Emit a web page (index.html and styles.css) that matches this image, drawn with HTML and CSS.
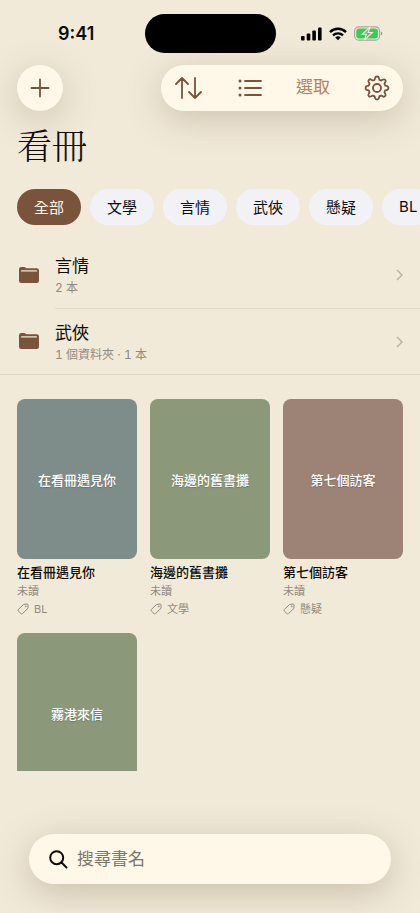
FILE: index.html
```html
<!DOCTYPE html>
<html lang="zh-Hant">
<head>
<meta charset="utf-8">
<meta name="viewport" content="width=device-width, initial-scale=1">
<title>看冊</title>
<link rel="stylesheet" href="styles.css">
</head>
<body>
<div class="status">
  <span class="time">9:41</span>
  <span class="island"></span>
  <span class="indicators">
    <svg width="21" height="14" viewBox="0 0 21 14"><rect x="0" y="9" width="3.6" height="4.5" rx="1"/><rect x="5.7" y="6.5" width="3.600" height="7" rx="1"/><rect x="11.3" y="3.5" width="3.600" height="10" rx="1"/><rect x="17" y="0.5" width="3.600" height="13" rx="1"/></svg>
    <svg width="18" height="14" viewBox="0 0 18 14" fill="none" stroke="#000" stroke-width="2.4"><path d="M1 5.1a11.4 11.4 0 0 1 16 0"/><path d="M4 8.4a7.2 7.2 0 0 1 10 0"/><path d="M9 13.3 6.2 10.5a4 4 0 0 1 5.6 0Z" fill="#000" stroke="none"/></svg>
    <svg width="29" height="15" viewBox="0 0 29 15"><rect x=".6" y=".9" width="25" height="13.2" rx="4.2" fill="none" stroke="#a9a598" stroke-width="1.1"/><rect x="2.3" y="2.6" width="21.6" height="9.8" rx="2.7" fill="#35ce5b"/><path d="M27 5.5c1.6.6 1.6 3.4 0 4Z" fill="#8d897e"/><path d="M16.2.8 8.2 8.3h4.2L10.2 14.2l8.2-7.7h-4.3Z" fill="#a29c91" stroke="#f1eada" stroke-width="1.1"/></svg>
  </span>
</div>

<header class="bar">
  <button class="add" aria-label="新增"><svg width="20" height="20" viewBox="0 0 20 20"><path d="M10 1.5v17M1.5 10h17"/></svg></button>
  <div class="tools">
    <button aria-label="排序"><svg width="30" height="24" viewBox="0 0 30 24"><path d="M8 22V2M2 8l6-6 6 6M21 2V22M15 16l6 6 6-6"/></svg></button>
    <button aria-label="清單"><svg width="24" height="20" viewBox="0 0 24 20"><path d="M7 3h16M7 10h16M7 17h16"/><g fill="#79533b" stroke="none"><circle cx="2" cy="3" r="1.5"/><circle cx="2" cy="10" r="1.5"/><circle cx="2" cy="17" r="1.5"/></g></svg></button>
    <button class="select">選取</button>
    <button aria-label="設定"><svg width="26" height="26" viewBox="0 0 26 26"><path d="M11 3.2Q11.3 1.5 13 1.5T15 3.2L15.4 4.8Q16.5 5.1 17.2 5.6L18.7 4.7Q20.2 3.9 21.2 4.9T21.3 7.3L20.4 8.8Q20.9 9.6 21.2 10.6L22.8 11Q24.5 11.3 24.5 13T22.8 15L21.2 15.4Q20.9 16.4 20.4 17.2L21.3 18.7Q22.1 20.2 21.1 21.2T18.7 21.3L17.2 20.4Q16.5 20.9 15.4 21.2L15 22.8Q14.7 24.5 13 24.5T11 22.8L10.6 21.2Q9.6 20.9 8.8 20.4L7.3 21.3Q5.8 22.1 4.8 21.1T4.7 18.7L5.6 17.2Q5.1 16.4 4.8 15.4L3.2 15Q1.5 14.7 1.5 13T3.2 11L4.8 10.6Q5.1 9.6 5.6 8.8L4.7 7.3Q3.9 5.8 4.9 4.8T7.3 4.7L8.8 5.6Q9.6 5.1 10.6 4.8Z"/><circle cx="13" cy="13" r="4"/></svg></button>
  </div>
</header>

<main>
  <h1>看冊</h1>
  <nav class="chips">
    <button class="on">全部</button><button>文學</button><button>言情</button><button>武俠</button><button>懸疑</button><button>BL</button>
  </nav>

  <div class="folders">
    <a href="#">
      <svg class="folder" viewBox="0 0 20 16"><path d="M0 5V2.3Q0 0 2.3 0H5Q6 0 6.7.7T8.4 1.3H17.700Q20 1.300 20 3.600V13.700Q20 16 17.700 16H2.300Q0 16 0 13.700Z" fill="#79533b"/><path d="M1.800 4.600Q1.800 3.200 3 3.200H17Q18.200 3.200 18.200 4.600Z" fill="#f2ead9"/></svg>
      <span class="row"><span class="text"><strong>言情</strong><small>2 本</small></span><svg class="chev" viewBox="0 0 7 12"><path d="M1 1l5 5-5 5"/></svg></span>
    </a>
    <a href="#">
      <svg class="folder" viewBox="0 0 20 16"><path d="M0 5V2.3Q0 0 2.3 0H5Q6 0 6.7.7T8.4 1.3H17.700Q20 1.300 20 3.600V13.700Q20 16 17.700 16H2.300Q0 16 0 13.700Z" fill="#79533b"/><path d="M1.800 4.600Q1.800 3.200 3 3.200H17Q18.200 3.200 18.200 4.600Z" fill="#f2ead9"/></svg>
      <span class="row"><span class="text"><strong>武俠</strong><small>1 個資料夾 · 1 本</small></span><svg class="chev" viewBox="0 0 7 12"><path d="M1 1l5 5-5 5"/></svg></span>
    </a>
  </div>

  <section class="books">
    <article><div class="cover slate">在看冊遇見你</div><h2>在看冊遇見你</h2><p>未讀</p><p class="tag"><svg viewBox="0 0 12 12"><path d="M6.500 1.500 10 1Q11 1 11 2V5.300L5.500 10.600Q4.800 11.300 4 10.600L1.300 8Q.6 7.200 1.300 6.500Z"/><circle cx="8.800" cy="3.300" r=".5"/></svg>BL</p></article>
    <article><div class="cover green">海邊的舊書攤</div><h2>海邊的舊書攤</h2><p>未讀</p><p class="tag"><svg viewBox="0 0 12 12"><path d="M6.500 1.500 10 1Q11 1 11 2V5.300L5.500 10.600Q4.800 11.300 4 10.600L1.300 8Q.6 7.200 1.300 6.500Z"/><circle cx="8.800" cy="3.300" r=".5"/></svg>文學</p></article>
    <article><div class="cover rose">第七個訪客</div><h2>第七個訪客</h2><p>未讀</p><p class="tag"><svg viewBox="0 0 12 12"><path d="M6.500 1.500 10 1Q11 1 11 2V5.300L5.500 10.600Q4.800 11.300 4 10.600L1.300 8Q.6 7.200 1.300 6.500Z"/><circle cx="8.800" cy="3.300" r=".5"/></svg>懸疑</p></article>
    <article><div class="cover green">霧港來信</div></article>
  </section>
</main>

<footer>
  <label class="search">
    <svg width="19" height="19" viewBox="0 0 19 19"><circle cx="7.700" cy="7.700" r="6.500"/><path d="m12.500 12.500 5 5"/></svg>
    <input type="search" placeholder="搜尋書名" aria-label="搜尋書名">
  </label>
</footer>
</body>
</html>
```
FILE: styles.css
```css
* { box-sizing: border-box; margin: 0; }

body {
  display: flex;
  flex-direction: column;
  height: 100vh;
  overflow: hidden;
  background: #f2ead9;
  color: #0d0c0a;
  font-family: Inter, "Noto Sans CJK TC", sans-serif;
}

button, input { font: inherit; border: 0; padding: 0; }
button { cursor: pointer; }
svg { display: block; flex: none; }

.status {
  display: grid;
  grid-template-columns: 1fr 131px 1fr;
  align-items: center;
  padding-top: 14px;
}
.time { padding-left: 8px; text-align: center; font-size: 18px; font-weight: 600; line-height: 24px; }
.island { height: 39px; border-radius: 20px; background: #000; }
.indicators { display: flex; align-items: center; justify-content: center; gap: 7px; padding-right: 11px; }

.bar { display: flex; justify-content: space-between; padding: 12px 17px 0; }
.bar svg { fill: none; stroke: #79533b; stroke-width: 1.8; stroke-linecap: round; stroke-linejoin: round; }
.add, .tools {
  height: 46px;
  border-radius: 23px;
  background: #fff8e8;
  box-shadow: 0 8px 36px rgba(90, 75, 40, 0.25);
}
.add { display: grid; place-items: center; width: 46px; }
.tools { display: flex; align-items: center; justify-content: space-between; gap: 34px; padding: 0 13px; }
.tools button { background: none; }
.tools .select { color: #b5835c; font-size: 17px; line-height: 24px; padding-bottom: 2px; }

main { flex: 1; min-height: 0; overflow: hidden; }
h1 {
  padding: 7px 17px 0;
  font-family: "Noto Serif CJK TC", "Songti TC", "Noto Sans CJK TC", serif;
  font-size: 35px;
  font-weight: 300;
  line-height: 52px;
}

.chips { display: flex; gap: 9px; padding: 19px 17px 0; overflow: hidden; }
.chips button {
  flex: none;
  height: 36px;
  padding: 0 17px 2px;
  border-radius: 18px;
  background: #f2f1f6;
  color: #0d0c0a;
  font-size: 15px;
}
.chips .on { background: #79533b; color: #fff8e8; }

.folders { margin-top: 17px; border-bottom: 1px solid #e2d9c8; }
.folders a { display: flex; align-items: center; color: inherit; text-decoration: none; }
.folder { width: 20px; height: 16px; margin: 0 16px 0 19px; }
.row { display: flex; flex: 1; align-items: center; justify-content: space-between; height: 66px; padding-right: 17px; }
.folders a + a .row { border-top: 1px solid #e2d9c8; }
.text { padding-top: 2px; }
.text strong { display: block; font-size: 17px; font-weight: 400; line-height: 24px; }
.text small { display: block; color: #918a7f; font-size: 12px; line-height: 20px; font-variant-numeric: tabular-nums; }
.chev { width: 7px; height: 12px; fill: none; stroke: #b9b0a2; stroke-width: 1.4; }

.books {
  display: grid;
  grid-template-columns: repeat(3, 1fr);
  gap: 15px 13px;
  padding: 24px 17px 0;
}
.cover {
  display: grid;
  place-items: center;
  aspect-ratio: 3 / 4;
  border-radius: 8px;
  color: #fff;
  font-size: 13px;
  font-weight: 500;
  text-shadow: 0 1px 1px rgba(0, 0, 0, 0.2);
}
.slate { background: #7e8d89; }
.green { background: #8b997a; }
.rose { background: #9d8376; }
.books h2 { padding-top: 3px; font-size: 13px; font-weight: 500; line-height: 20px; }
.books p { color: #918a7f; font-size: 11px; line-height: 18px; }
.books .tag { display: flex; align-items: center; gap: 5px; }
.tag svg { width: 12px; height: 12px; fill: none; stroke: #918a7f; stroke-width: 1; }

footer { padding: 63px 29px 29px; }
.search {
  display: flex;
  align-items: center;
  gap: 9px;
  height: 50px;
  padding: 0 20px;
  border-radius: 25px;
  background: #fff8e8;
  box-shadow: 0 8px 36px rgba(90, 75, 40, 0.28);
}
.search svg { fill: none; stroke: #0d0c0a; stroke-width: 2; stroke-linecap: round; }
.search input { flex: 1; min-width: 0; background: none; outline: 0; font-size: 17px; }
.search input::placeholder { color: #7b766c; opacity: 1; }
```
